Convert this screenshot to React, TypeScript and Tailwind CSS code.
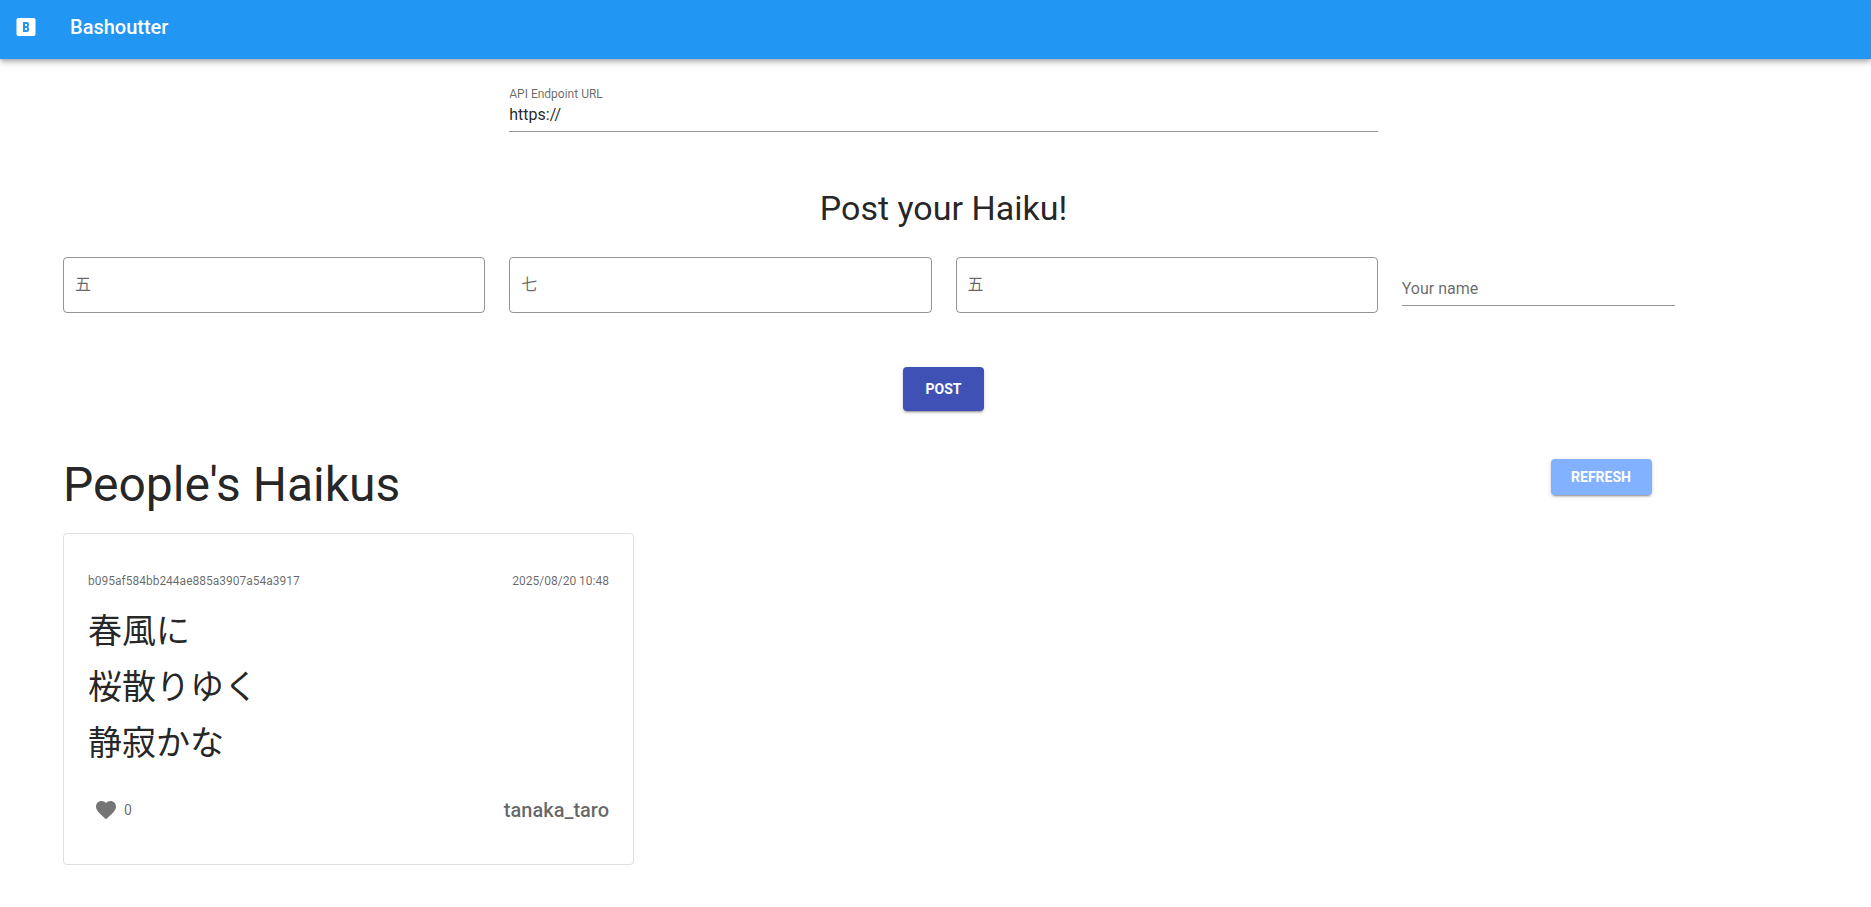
import { useState } from "react";

type Haiku = {
  id: string;
  createdAt: string;
  lines: string[];
  userName: string;
  likes: number;
};

const initialHaikus: Haiku[] = [
  {
    id: "b095af584bb244ae885a3907a54a3917",
    createdAt: "2025/08/20 10:48",
    lines: ["春風に", "桜散りゆく", "静寂かな"],
    userName: "tanaka_taro",
    likes: 0,
  },
];

const phrases = [
  { name: "first", label: "五" },
  { name: "second", label: "七" },
  { name: "third", label: "五" },
];

const buttonShadow =
  "shadow-[0_3px_1px_-2px_rgba(0,0,0,0.2),0_2px_2px_0_rgba(0,0,0,0.14),0_1px_5px_0_rgba(0,0,0,0.12)]";

const Logo: React.FC = () => (
  <svg viewBox="0 0 24 24" className="size-6 fill-current" aria-hidden="true">
    <path d="M4.3,3H19.7A1.8,1.8 0 0,1 21.5,4.8V19.2A1.8,1.8 0 0,1 19.7,21H4.3A1.8,1.8 0 0,1 2.5,19.2V4.8A1.8,1.8 0 0,1 4.3,3M9,7V17H13A2,2 0 0,0 15,15V13.5C15,12.7 14.3,12 13.5,12C14.3,12 15,11.3 15,10.5V9A2,2 0 0,0 13,7H9M11,9H13V11H11V9M11,13H13V15H11V13Z" />
  </svg>
);

const Heart: React.FC = () => (
  <svg viewBox="0 0 24 24" className="size-6 fill-current" aria-hidden="true">
    <path d="M12,21.35L10.55,20.03C5.4,15.36 2,12.27 2,8.5C2,5.41 4.42,3 7.5,3C9.24,3 10.91,3.81 12,5.08C13.09,3.81 14.76,3 16.5,3C19.58,3 22,5.41 22,8.5C22,12.27 18.6,15.36 13.45,20.03L12,21.35Z" />
  </svg>
);

const Header: React.FC = () => (
  <header className="relative flex items-start bg-[#2196f3] text-white h-[59px] px-[14px] shadow-[0_2px_4px_-1px_rgba(0,0,0,0.2),0_4px_5px_0_rgba(0,0,0,0.14),0_1px_10px_0_rgba(0,0,0,0.12)]">
    <div className="flex items-center gap-8 h-[54px]">
      <Logo />
      <h1 className="text-xl font-medium">Bashoutter</h1>
    </div>
  </header>
);

const HaikuCard: React.FC<{ haiku: Haiku }> = ({ haiku }) => {
  const [likes, setLikes] = useState(haiku.likes);

  return (
    <article className="col-span-4 border border-[#e0e0e0] rounded px-6 pt-[37px] pb-9">
      <div className="flex justify-between text-xs leading-5 text-black/60">
        <span>{haiku.id}</span>
        <time>{haiku.createdAt}</time>
      </div>
      {/* Haiku */}
      <div className="mt-3 text-[34px] leading-[56px]">
        {haiku.lines.map((line) => (
          <p key={line}>{line}</p>
        ))}
      </div>
      {/* Likes and author */}
      <div className="mt-[21px] flex h-9 items-center justify-between text-black/60">
        <div className="flex items-center">
          <button
            type="button"
            aria-label="Like"
            onClick={() => setLikes(likes + 1)}
            className="flex size-9 items-center justify-center rounded-full text-black/54"
          >
            <Heart />
          </button>
          <span className="text-sm">{likes}</span>
        </div>
        <span className="text-xl font-medium">{haiku.userName}</span>
      </div>
    </article>
  );
};

const App: React.FC = () => {
  const [endpoint, setEndpoint] = useState("https://");

  const handlePost = (e: React.FormEvent) => {
    e.preventDefault();
  };

  return (
    <div
      lang="ja"
      className="min-h-screen bg-white text-black/87 font-[Roboto,'Noto_Sans_CJK_JP',sans-serif]"
    >
      <Header />
      <main className="pl-[63px] pr-[47px] pt-[27px] pb-10">
        {/* API endpoint */}
        <div className="grid grid-cols-12 gap-x-6">
          <div className="col-start-4 col-span-6 flex flex-col">
            <label htmlFor="endpoint" className="text-xs text-black/60">
              API Endpoint URL
            </label>
            <input
              id="endpoint"
              type="text"
              value={endpoint}
              onChange={(e) => setEndpoint(e.target.value)}
              className="h-[30px] pb-1 border-b border-black/42 outline-none"
            />
          </div>
        </div>

        {/* Post form */}
        <form onSubmit={handlePost} className="mt-14">
          <h2 className="text-center text-[34px] leading-10">
            Post your Haiku!
          </h2>
          <div className="mt-[29px] grid grid-cols-12 gap-x-6 items-start">
            {phrases.map((phrase) => (
              <input
                key={phrase.name}
                type="text"
                name={phrase.name}
                aria-label={phrase.label}
                placeholder={phrase.label}
                className="col-span-3 h-14 px-[11px] pb-[2px] rounded border border-black/42 placeholder:text-black/60 outline-none"
              />
            ))}
            <input
              type="text"
              name="userName"
              aria-label="Your name"
              placeholder="Your name"
              className="col-span-2 h-[49px] pt-[15px] border-b border-black/42 placeholder:text-black/60 outline-none"
            />
          </div>
          <div className="mt-[54px] flex justify-center">
            <button
              type="submit"
              className={`h-11 min-w-[81px] px-5 rounded bg-[#3f51b5] text-white text-sm font-bold uppercase ${buttonShadow}`}
            >
              Post
            </button>
          </div>
        </form>

        {/* Haiku list */}
        <section className="mt-12">
          <div className="grid grid-cols-12 gap-x-6 items-start">
            <h2 className="col-span-10 text-5xl leading-[52px]">
              People's Haikus
            </h2>
            <button
              type="button"
              className={`h-9 min-w-[101px] justify-self-start px-4 rounded bg-[#82b1ff] text-white text-sm font-bold uppercase ${buttonShadow}`}
            >
              Refresh
            </button>
          </div>
          <div className="mt-[22px] grid grid-cols-12 gap-6">
            {initialHaikus.map((haiku) => (
              <HaikuCard key={haiku.id} haiku={haiku} />
            ))}
          </div>
        </section>
      </main>
    </div>
  );
};

export default App;
